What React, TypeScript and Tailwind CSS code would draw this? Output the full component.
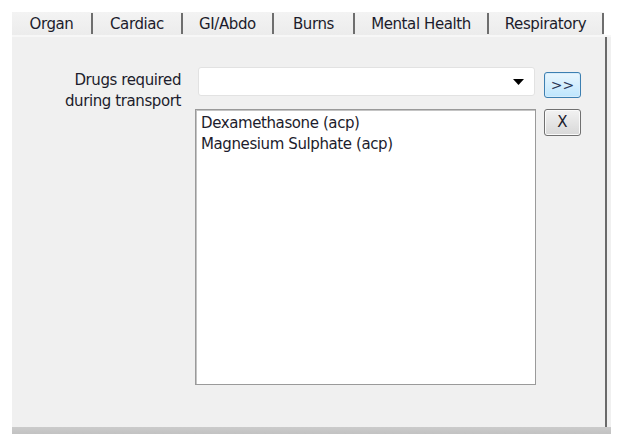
import React from "react";

const tabs: { label: string; w: string }[] = [
  { label: "Organ", w: "w-[81px]" },
  { label: "Cardiac", w: "w-[90px]" },
  { label: "GI/Abdo", w: "w-[91px]" },
  { label: "Burns", w: "w-[81px]" },
  { label: "Mental Health", w: "w-[134px]" },
  { label: "Respiratory", w: "w-[115px]" },
];

export default function App() {
  return (
    <div
      className="w-[624px] h-[447px] bg-white pl-[12px] pt-[12px] text-[#1c1c2c]"
      style={{ fontFamily: '"DejaVu Sans", Tahoma, sans-serif' }}
    >
      <div className="flex h-[23px]">
        {tabs.map((t) => (
          <div
            key={t.label}
            className={`${t.w} h-[23px] flex items-center bg-gradient-to-b from-[#f3f3f3] to-[#ececec]`}
          >
            <div className="flex-1 text-center text-[15px] leading-[20px] tracking-[-0.4px]">
              {t.label}
            </div>
            <div className="w-[2px] h-[21px] bg-[#6e6e6e]" />
          </div>
        ))}
      </div>
      <div className="w-[599px] h-[392px] bg-[#f0f0f0] flex border-t-2 border-[#f7f7f7]">
        <div className="w-[593px] flex pt-[30px]">
          <div className="w-[169px] text-right text-[15px] leading-[21px] pt-[3px] tracking-[-0.4px]">
            <div>Drugs required</div>
            <div>during transport</div>
          </div>
          <div className="ml-[14px] w-[341px] flex flex-col">
            <div className="ml-[3px] w-[337px] h-[29px] bg-white border border-[#e2e2e2] rounded-[3px] flex items-center justify-end pr-[10px]">
              <svg width="11" height="6" viewBox="0 0 11 6">
                <polygon points="0,0 11,0 5.5,6" fill="#000" />
              </svg>
            </div>
            <div className="mt-[13px] w-[341px] h-[276px] bg-white border border-[#9a9a9a] shadow-[inset_1px_1px_0_#c4c4c4] px-[5px] pt-[3px] text-[15px] leading-[21px] tracking-[-0.4px]">
              <div>Dexamethasone (acp)</div>
              <div>Magnesium Sulphate (acp)</div>
            </div>
          </div>
          <div className="ml-[8px] flex flex-col">
            <div className="mt-[5px] w-[37px] h-[26px] rounded-[3px] border border-[#3c7fb1] bg-gradient-to-b from-[#eaf6fd] to-[#bee6fd] flex items-center justify-center text-[14px] text-[#2a3656] shadow-[inset_0_0_0_1px_#d6ecfa]">
              &gt;&gt;
            </div>
            <div className="mt-[11px] w-[37px] h-[27px] rounded-[3px] border border-[#707070] bg-gradient-to-b from-[#f2f2f2] to-[#d8d8d8] flex items-center justify-center text-[15px] text-[#1c1c2c] shadow-[inset_0_0_0_1px_#fafafa]">
              X
            </div>
          </div>
        </div>
        <div className="w-[2px] h-full bg-[#6a6a6a]" />
      </div>
      <div className="w-[599px] h-[7px] bg-gradient-to-b from-[#cbcbcb] to-[#c2c2c2]" />
    </div>
  );
}
